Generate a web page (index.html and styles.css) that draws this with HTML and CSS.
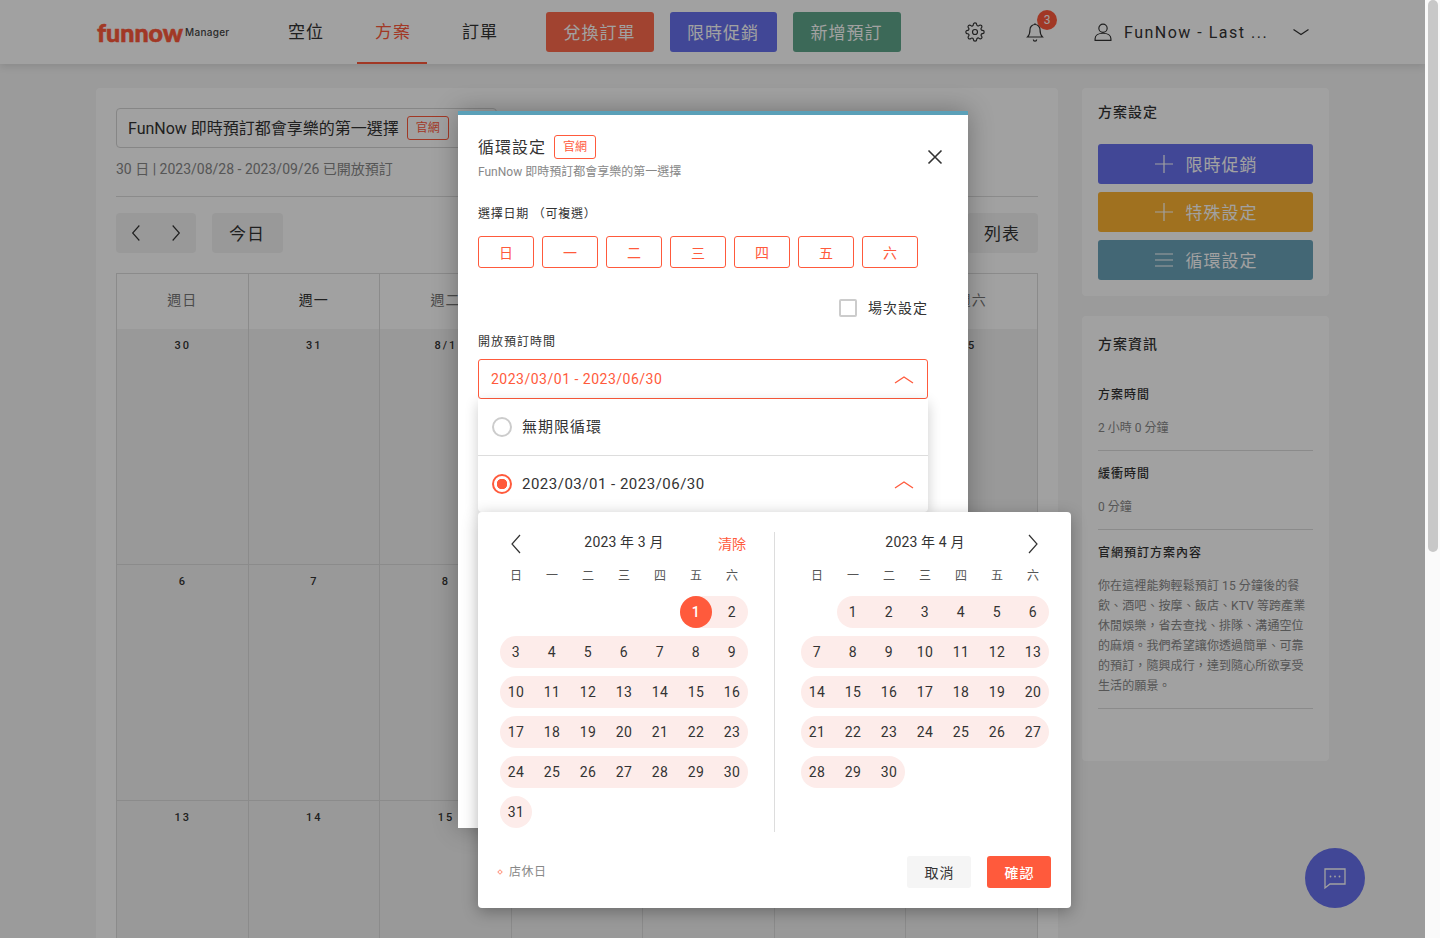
FILE: index.html
```html
<!DOCTYPE html>
<html lang="zh-Hant">
<head>
<meta charset="utf-8">
<title>FunNow Manager</title>
<link rel="stylesheet" href="styles.css">
</head>
<body>
<svg class="defs" aria-hidden="true">
  <symbol id="left" viewBox="0 0 24 24"><path d="M16 3L8 12l8 9"/></symbol>
  <symbol id="right" viewBox="0 0 24 24"><path d="M8 3l8 9-8 9"/></symbol>
  <symbol id="up" viewBox="0 0 24 24"><path d="M3 16l9-6 9 6"/></symbol>
  <symbol id="down" viewBox="0 0 24 24"><path d="M3 9l9 6 9-6"/></symbol>
  <symbol id="plus" viewBox="0 0 24 24"><path d="M12 3v18M3 12h18"/></symbol>
  <symbol id="menu" viewBox="0 0 24 24"><path d="M3 6h18M3 12h18M3 18h18"/></symbol>
</svg>
<div class="screen">
  <div class="viewport">
    <header class="topbar">
      <div class="logo"><span class="logo-main">funnow</span><span class="logo-sub">Manager</span></div>
      <nav class="nav">
        <a class="nav-item">空位</a>
        <a class="nav-item active">方案</a>
        <a class="nav-item">訂單</a>
      </nav>
      <div class="top-actions">
        <button class="top-btn red">兌換訂單</button>
        <button class="top-btn blue">限時促銷</button>
        <button class="top-btn green">新增預訂</button>
      </div>
      <svg class="top-icon gear" viewBox="0 0 24 24"><circle cx="12" cy="12" r="3"/><path d="M19.4 15a1.65 1.65 0 0 0 .33 1.82l.06.06a2 2 0 0 1 0 2.83 2 2 0 0 1-2.83 0l-.06-.06a1.65 1.65 0 0 0-1.82-.33 1.65 1.65 0 0 0-1 1.51V21a2 2 0 0 1-2 2 2 2 0 0 1-2-2v-.09A1.65 1.65 0 0 0 9 19.4a1.65 1.65 0 0 0-1.82.33l-.06.06a2 2 0 0 1-2.83 0 2 2 0 0 1 0-2.83l.06-.06a1.65 1.65 0 0 0 .33-1.82 1.65 1.65 0 0 0-1.51-1H3a2 2 0 0 1-2-2 2 2 0 0 1 2-2h.09A1.65 1.65 0 0 0 4.6 9a1.65 1.65 0 0 0-.33-1.82l-.06-.06a2 2 0 0 1 0-2.83 2 2 0 0 1 2.83 0l.06.06a1.65 1.65 0 0 0 1.82.33H9a1.65 1.65 0 0 0 1-1.51V3a2 2 0 0 1 2-2 2 2 0 0 1 2 2v.09a1.65 1.65 0 0 0 1 1.51 1.65 1.65 0 0 0 1.82-.33l.06-.06a2 2 0 0 1 2.83 0 2 2 0 0 1 0 2.83l-.06.06a1.65 1.65 0 0 0-.33 1.82V9a1.65 1.65 0 0 0 1.51 1H21a2 2 0 0 1 2 2 2 2 0 0 1-2 2h-.09a1.65 1.65 0 0 0-1.51 1z"/></svg>
      <div class="bell-wrap">
        <svg class="top-icon" viewBox="0 0 24 24"><path d="M18 9A6 6 0 0 0 6 9c0 6-2 8-3 9h18c-1-1-3-3-3-9"/><path d="M14 21a2 2 0 0 1-4 0"/><path d="M12 3V1.5"/></svg>
        <span class="bell-badge">3</span>
      </div>
      <div class="user">
        <svg class="top-icon" viewBox="0 0 24 24"><circle cx="12" cy="7.5" r="5"/><path d="M2.5 22v-2c0-4 4-6.500 9.500-6.500s9.500 2.500 9.500 6.500v2z"/></svg>
        <span class="user-name">FunNow - Last ...</span>
        <svg class="user-arrow"><use href="#down"/></svg>
      </div>
    </header>

    <main class="content">
      <section class="main-card">
        <div class="title-box">
          <span class="title-text">FunNow 即時預訂都會享樂的第一選擇</span>
          <span class="badge">官網</span>
        </div>
        <p class="period">30 日 | 2023/08/28 - 2023/09/26 已開放預訂</p>
        <div class="toolbar">
          <div class="pager">
            <svg class="pager-icon"><use href="#left"/></svg>
            <svg class="pager-icon"><use href="#right"/></svg>
          </div>
          <button class="tool-btn today">今日</button>
          <button class="tool-btn list">列表</button>
        </div>
        <div class="cal">
          <div class="cal-head">週日</div><div class="cal-head">週一</div><div class="cal-head">週二</div><div class="cal-head">週三</div><div class="cal-head">週四</div><div class="cal-head">週五</div><div class="cal-head">週六</div>
          <div class="cal-cell">30</div><div class="cal-cell">31</div><div class="cal-cell">8/1</div><div class="cal-cell">2</div><div class="cal-cell">3</div><div class="cal-cell">4</div><div class="cal-cell">5</div>
          <div class="cal-cell">6</div><div class="cal-cell">7</div><div class="cal-cell">8</div><div class="cal-cell">9</div><div class="cal-cell">10</div><div class="cal-cell">11</div><div class="cal-cell">12</div>
          <div class="cal-cell">13</div><div class="cal-cell">14</div><div class="cal-cell">15</div><div class="cal-cell">16</div><div class="cal-cell">17</div><div class="cal-cell">18</div><div class="cal-cell">19</div>
        </div>
      </section>
      <aside class="side">
        <section class="side-card settings">
          <h3 class="side-title">方案設定</h3>
          <button class="side-btn blue"><svg class="side-icon"><use href="#plus"/></svg><span class="side-btn-text">限時促銷</span></button>
          <button class="side-btn yellow"><svg class="side-icon"><use href="#plus"/></svg><span class="side-btn-text">特殊設定</span></button>
          <button class="side-btn teal"><svg class="side-icon"><use href="#menu"/></svg><span class="side-btn-text">循環設定</span></button>
        </section>
        <section class="side-card info">
          <h3 class="side-title">方案資訊</h3>
          <div class="info-block first"><h4 class="info-label">方案時間</h4><p class="info-value">2 小時 0 分鐘</p></div>
          <div class="info-block"><h4 class="info-label">緩衝時間</h4><p class="info-value">0 分鐘</p></div>
          <div class="info-block"><h4 class="info-label">官網預訂方案內容</h4><p class="info-value para">你在這裡能夠輕鬆預訂 15 分鐘後的餐<br>飲、酒吧、按摩、飯店、KTV 等跨產業<br>休閒娛樂，省去查找、排隊、溝通空位<br>的麻煩。我們希望讓你透過簡單、可靠<br>的預訂，隨興成行，達到隨心所欲享受<br>生活的願景。</p></div>
        </section>
      </aside>
    </main>

    <button class="fab" aria-label="chat">
      <svg viewBox="0 0 24 24"><path d="M2 3h20v15H7l-5 4z"/><path class="dots" d="M7.500 10.500h.01M12 10.500h.01M16.500 10.500h.01"/></svg>
    </button>

    <div class="overlay"></div>

    <div class="modal">
      <div class="modal-head">
        <div>
          <div class="modal-title-row"><h2 class="modal-title">循環設定</h2><span class="badge bright">官網</span></div>
          <p class="modal-sub">FunNow 即時預訂都會享樂的第一選擇</p>
        </div>
        <svg class="close" viewBox="0 0 24 24"><path d="M5.500 5.500l13 13M18.500 5.500l-13 13"/></svg>
      </div>
      <div class="field-label weekdays-label">選擇日期 （可複選）</div>
      <div class="week-btns">
        <button class="week-btn">日</button><button class="week-btn">一</button><button class="week-btn">二</button><button class="week-btn">三</button><button class="week-btn">四</button><button class="week-btn">五</button><button class="week-btn">六</button>
      </div>
      <label class="check-row"><span class="check"></span><span class="check-text">場次設定</span></label>
      <div class="field-label time-label">開放預訂時間</div>
      <div class="select"><span>2023/03/01 - 2023/06/30</span><svg class="chev"><use href="#up"/></svg></div>
      <div class="dropdown">
        <div class="option"><span class="radio"></span><span class="opt-cjk">無期限循環</span></div>
        <div class="option"><span class="radio on"></span><span class="opt-date">2023/03/01 - 2023/06/30</span><svg class="chev"><use href="#up"/></svg></div>
      </div>
    </div>

    <div class="picker">
      <div class="months">
        <div class="month first-month">
          <div class="month-head">
            <svg class="month-nav"><use href="#left"/></svg>
            <span class="month-title">2023 年 3 月</span>
            <span class="clear">清除</span>
          </div>
          <div class="dow"><span>日</span><span>一</span><span>二</span><span>三</span><span>四</span><span>五</span><span>六</span></div>
          <div class="days">
            <i></i><i></i><i></i><i></i><i></i>
            <span class="day s"><b class="sel">1</b></span><span class="day e">2</span>
            <span class="day s">3</span><span class="day">4</span><span class="day">5</span><span class="day">6</span><span class="day">7</span><span class="day">8</span><span class="day e">9</span>
            <span class="day s">10</span><span class="day">11</span><span class="day">12</span><span class="day">13</span><span class="day">14</span><span class="day">15</span><span class="day e">16</span>
            <span class="day s">17</span><span class="day">18</span><span class="day">19</span><span class="day">20</span><span class="day">21</span><span class="day">22</span><span class="day e">23</span>
            <span class="day s">24</span><span class="day">25</span><span class="day">26</span><span class="day">27</span><span class="day">28</span><span class="day">29</span><span class="day e">30</span>
            <span class="day s e">31</span>
          </div>
        </div>
        <div class="month second-month">
          <div class="month-head">
            <span></span>
            <span class="month-title">2023 年 4 月</span>
            <svg class="month-nav end"><use href="#right"/></svg>
          </div>
          <div class="dow"><span>日</span><span>一</span><span>二</span><span>三</span><span>四</span><span>五</span><span>六</span></div>
          <div class="days">
            <i></i>
            <span class="day s">1</span><span class="day">2</span><span class="day">3</span><span class="day">4</span><span class="day">5</span><span class="day e">6</span>
            <span class="day s">7</span><span class="day">8</span><span class="day">9</span><span class="day">10</span><span class="day">11</span><span class="day">12</span><span class="day e">13</span>
            <span class="day s">14</span><span class="day">15</span><span class="day">16</span><span class="day">17</span><span class="day">18</span><span class="day">19</span><span class="day e">20</span>
            <span class="day s">21</span><span class="day">22</span><span class="day">23</span><span class="day">24</span><span class="day">25</span><span class="day">26</span><span class="day e">27</span>
            <span class="day s">28</span><span class="day">29</span><span class="day e">30</span>
          </div>
        </div>
      </div>
      <div class="picker-foot">
        <div class="legend"><span class="diamond"></span><span class="legend-text">店休日</span></div>
        <div class="foot-btns"><button class="foot-btn cancel">取消</button><button class="foot-btn ok">確認</button></div>
      </div>
    </div>
  </div>
  <div class="scrollbar"><div class="thumb"></div></div>
</div>
</body>
</html>
```

FILE: styles.css
```css
* { box-sizing: border-box; }
html, body { margin: 0; padding: 0; height: 100%; overflow: hidden; }
body { font-family: Roboto, "Noto Sans CJK TC", sans-serif; color: #333; font-size: 14px; }
h2, h3, h4, p { margin: 0; font-weight: 400; }
button { font-family: inherit; border: 0; padding: 0; cursor: pointer; }
svg { display: block; fill: none; stroke: currentColor; }
.defs { position: absolute; width: 0; height: 0; }

.screen { display: flex; width: 1440px; height: 938px; overflow: hidden; }
.viewport { position: relative; width: 1425px; height: 938px; overflow: hidden; background: #f5f5f5; }
.scrollbar { width: 15px; background: #fafafa; padding: 0 2px 0 3px; }
.thumb { height: 552px; border-radius: 5px; background: #c8c8c8; }

/* top bar */
.topbar { display: flex; align-items: center; height: 64px; padding-left: 97px; background: #fff; box-shadow: 0 2px 8px rgba(0,0,0,.12); position: relative; }
.logo { display: flex; align-items: center; width: 133px; margin-right: 40px; }
.logo-main { font-family: Lato, sans-serif; font-weight: 900; font-size: 25px; line-height: 28px; letter-spacing: 0; color: #ff5a3c; width: 88px; -webkit-text-stroke: .6px #ff5a3c; }
.logo-sub { font-family: Inter, sans-serif; font-size: 10px; font-weight: 500; letter-spacing: .3px; color: #444; margin-top: -1px; }
.nav { display: flex; gap: 17px; height: 64px; margin-right: 32px; }
.nav-item { width: 70px; padding-left: 2px; line-height: 64px; height: 64px; text-align: center; font-size: 17px; letter-spacing: 1px; color: #333; }
.nav-item.active { color: #ff5a3c; border-bottom: 2px solid #ff5a3c; }
.top-actions { display: flex; gap: 16px; margin-right: 64px; }
.top-btn { width: 108px; height: 40px; padding: 0 1px 2px 0; border-radius: 3px; color: #fff; font-size: 17px; letter-spacing: 1px; }
.top-btn.blue { width: 107px; }
.red { background: #ff6a4d; }
.blue { background: #6771ee; }
.green { background: #60a78c; }
.yellow { background: #feb331; }
.teal { background: #6aa3ba; }
.top-icon { width: 20px; height: 20px; stroke-width: 1.4; color: #333; }
.bell-wrap { position: relative; margin-left: 40px; }
.bell-badge { position: absolute; left: 12px; top: -12px; width: 20px; height: 20px; border-radius: 50%; background: #ff5a3c; color: #fff; font-size: 12px; line-height: 20px; text-align: center; }
.user { display: flex; align-items: center; margin-left: 48px; }
.user-name { margin-left: 11px; width: 142px; font-size: 16px; letter-spacing: 1.5px; white-space: nowrap; }
.user-arrow { margin-left: 25px; width: 20px; height: 20px; stroke-width: 1.5; color: #333; }

/* content */
.content { display: flex; gap: 24px; padding: 24px 0 0 96px; }
.main-card { width: 962px; height: 1100px; padding: 20px; background: #fff; border-radius: 4px; }
.title-box { display: flex; align-items: center; width: 381px; height: 40px; padding: 0 11px; border: 1px solid #d4d4d4; border-radius: 4px; }
.title-text { padding-bottom: 3px; font-size: 16px; white-space: nowrap; color: #333; }
.badge { flex: none; display: inline-block; width: 42px; height: 24px; margin-left: 8px; border: 1px solid #ff5a3c; border-radius: 3px; color: #ff5a3c; font-size: 12px; line-height: 22px; text-align: center; }
.period { margin-top: 11px; padding-bottom: 17px; border-bottom: 1px solid #ddd; font-size: 14px; line-height: 20px; color: #888; }
.toolbar { display: flex; gap: 16px; margin-top: 16px; }
.pager { display: flex; align-items: center; justify-content: space-between; width: 80px; height: 40px; padding: 0 10px; background: #f3f3f3; border-radius: 4px; }
.pager-icon { width: 20px; height: 20px; stroke-width: 1.4; color: #333; }
.tool-btn { height: 40px; padding: 0 1px 2px 0; background: #f3f3f3; border-radius: 4px; font-size: 17px; letter-spacing: 1px; color: #333; }
.today { width: 71px; }
.list { width: 71px; margin-left: auto; }
.cal { display: grid; grid-template-columns: repeat(7, 1fr); width: 922px; margin-top: 20px; border-top: 1px solid #ddd; border-left: 1px solid #ddd; }
.cal-head { height: 55px; line-height: 53px; text-align: center; font-size: 14px; letter-spacing: 1px; color: #777; border-right: 1px solid #ddd; }
.cal-cell { height: 236px; padding-top: 9px; padding-left: 1px; background: #f3f3f3; border-right: 1px solid #ddd; border-bottom: 1px solid #ddd; text-align: center; font-size: 11px; line-height: 16px; font-weight: 500; letter-spacing: 2px; color: #333; }
.cal-head:nth-child(7n+2) { color: #333; }

.side { width: 247px; display: flex; flex-direction: column; gap: 20px; }
.side-card { padding: 16px; background: #fff; border-radius: 4px; }
.settings { height: 208px; }
.side-title { font-size: 14px; line-height: 16px; font-weight: 500; letter-spacing: 1px; color: #333; }
.side-btn { display: flex; align-items: center; justify-content: center; gap: 10px; width: 215px; height: 40px; margin-top: 8px; padding-right: 2px; border-radius: 3px; color: #fff; font-size: 17px; letter-spacing: 1px; }
.side-btn-text { padding-bottom: 2px; }
.side-title + .side-btn { margin-top: 24px; }
.side-icon { width: 24px; height: 24px; stroke-width: 1.2; }
.info { height: 445px; padding-top: 20px; }
.info-block { border-bottom: 1px solid #ddd; padding-top: 15px; padding-bottom: 14px; }
.info-block.first { margin-top: 27px; padding-top: 8px; }
.info-label { font-size: 12px; line-height: 16px; font-weight: 500; letter-spacing: 1px; color: #333; }
.info-value { margin-top: 17px; font-size: 12px; line-height: 16px; color: #888; }
.para { line-height: 20px; margin-top: 15px; letter-spacing: .1px; white-space: nowrap; }
.info-block:last-child { padding-bottom: 12px; }

.fab { position: absolute; left: 1305px; top: 848px; width: 60px; height: 60px; border-radius: 50%; background: #6771ee; color: #fff; display: flex; align-items: center; justify-content: center; }
.fab svg { width: 24px; height: 24px; stroke-width: 1.3; }
.fab .dots { stroke-linecap: round; stroke-width: 1.8; }

.overlay { position: absolute; inset: 0; background: rgba(0,0,0,.37); }

/* modal */
.modal { position: absolute; left: 458px; top: 111px; width: 510px; height: 717px; padding: 20px 40px 0 20px; background: #fff; border-top: 4px solid #5ba0b8; box-shadow: 0 0 24px rgba(0,0,0,.3); }
.modal-head { display: flex; align-items: center; justify-content: space-between; margin-right: -19px; }
.modal-title-row { display: flex; align-items: center; height: 24px; }
.modal-title { padding-bottom: 2px; font-size: 16px; letter-spacing: 1px; color: #333; }
.badge.bright { margin-left: 8px; }
.modal-sub { margin-top: 4px; font-size: 12px; line-height: 18px; color: #888; }
.close { width: 24px; height: 24px; stroke-width: 1.6; color: #333; margin-top: -3px; }
.field-label { font-size: 12px; line-height: 18px; letter-spacing: 1px; color: #333; }
.weekdays-label { margin-top: 24px; letter-spacing: .75px; }
.week-btns { display: flex; gap: 8px; margin-top: 13px; }
.week-btn { width: 56px; height: 32px; background: #fff; border: 1px solid #ff5a3c; border-radius: 3px; color: #ff5a3c; font-size: 14px; }
.check-row { display: flex; align-items: center; justify-content: flex-end; gap: 11px; height: 20px; margin-top: 30px; }
.check { flex: none; width: 18px; height: 18px; border: 2px solid #ccc; border-radius: 2px; }
.check-text { font-size: 14px; letter-spacing: 1px; line-height: 20px; }
.time-label { margin-top: 15px; }
.select { display: flex; align-items: center; justify-content: space-between; height: 40px; margin-top: 8px; padding: 0 11px 0 12px; border: 1px solid #ff5a3c; border-radius: 3px; color: #ff5a3c; font-size: 14px; letter-spacing: .5px; }
.chev { width: 24px; height: 24px; stroke-width: 1.3; color: #ff5a3c; }
.dropdown { position: absolute; left: 20px; top: 284px; width: 450px; height: 113px; background: #fff; border-radius: 0 0 4px 4px; box-shadow: 0 4px 14px rgba(0,0,0,.2); }
.option { display: flex; align-items: center; height: 56px; padding: 0 12px 0 14px; }
.option:first-child { border-bottom: 1px solid #ddd; height: 57px; }
.radio { flex: none; width: 20px; height: 20px; margin-right: 10px; border: 2px solid #ccc; border-radius: 50%; background: #fff; }
.radio.on { border-color: #ff5a3c; background: radial-gradient(circle, #ff5a3c 0 5px, #fff 5.5px); }
.opt-cjk { margin-top: -3px; font-size: 15px; letter-spacing: 1px; }
.opt-date { flex: 1; font-size: 15px; letter-spacing: .5px; }

/* date picker */
.picker { position: absolute; left: 478px; top: 512px; width: 593px; height: 396px; padding: 20px; background: #fff; border-radius: 4px; box-shadow: 0 4px 16px rgba(0,0,0,.3); }
.months { display: flex; height: 300px; }
.first-month { width: 277px; padding-right: 24px; border-right: 1px solid #ddd; }
.second-month { width: 276px; padding-left: 24px; }
.month-head { display: grid; grid-template-columns: 72px 1fr 72px; height: 24px; }
.month-nav { width: 36px; height: 24px; stroke-width: 1.2; color: #333; }
.month-nav.end { justify-self: end; }
.month-title { text-align: center; font-size: 14px; line-height: 20px; letter-spacing: .15px; color: #333; white-space: nowrap; }
.clear { justify-self: end; margin-right: 4px; font-size: 14px; line-height: 24px; color: #ff5a3c; }
.dow { display: grid; grid-template-columns: repeat(7, 36px); margin-top: 10px; height: 20px; line-height: 20px; text-align: center; font-size: 12px; color: #555; }
.days { display: grid; grid-template-columns: repeat(7, 36px); grid-auto-rows: 32px; row-gap: 8px; margin-top: 10px; }
.day { display: flex; align-items: center; justify-content: center; height: 32px; background: #fdecea; font-size: 14px; letter-spacing: .5px; color: #333; }
.day.s { margin-left: 2px; border-radius: 16px 0 0 16px; padding-right: 2px; }
.day.e { margin-right: 2px; border-radius: 0 16px 16px 0; padding-left: 2px; }
.day.s.e { border-radius: 16px; padding: 0; }
.sel { width: 32px; height: 32px; border-radius: 50%; background: #ff5a3c; color: #fff; font-weight: 500; line-height: 32px; text-align: center; }
.day.s:has(.sel) { padding: 0; justify-content: flex-start; }
.picker-foot { display: flex; align-items: center; justify-content: space-between; margin-top: 24px; height: 32px; }
.legend { display: flex; align-items: center; gap: 7px; font-size: 12px; letter-spacing: .5px; color: #888; }
.legend-text { margin-top: -3px; }
.diamond { width: 4px; height: 4px; border: 1px solid #ff9a85; transform: rotate(45deg); }
.foot-btns { display: flex; gap: 16px; }
.foot-btn { width: 64px; height: 32px; padding: 0 0 1px 1px; border-radius: 3px; font-size: 14px; letter-spacing: 1px; }
.cancel { background: #f5f5f5; color: #333; }
.ok { background: #ff5a3c; color: #fff; font-weight: 500; }
```
